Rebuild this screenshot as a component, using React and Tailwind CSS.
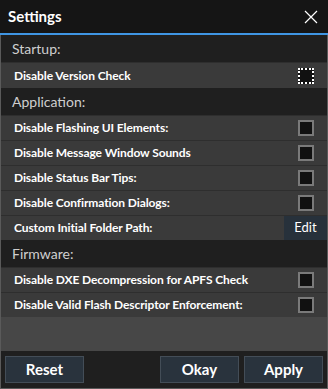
import { useState } from 'react';

const font = { fontFamily: 'Lato, "Noto Sans", sans-serif' };

function Check({ focused, checked, onToggle }) {
  return (
    <button
      onClick={onToggle}
      className={`w-[16px] h-[16px] bg-[#111] ${focused ? 'border-2 border-dotted border-white' : 'border-2 border-[#7a7a7a]'}`}
    >
      {checked && <span className="block w-full h-full bg-[#4a9ce6]" />}
    </button>
  );
}

function Header({ children }) {
  return (
    <div className="h-[27px] flex items-center pl-[11px] bg-[#1f1f1f] text-[14px] text-[#cfcfcf]">
      {children}
    </div>
  );
}

function Row({ label, focused, tall, checked, onToggle, edit }) {
  return (
    <div className={`${tall ? 'h-[26px]' : 'h-[25px]'} flex items-center justify-between bg-[#3a3a3a] border-t border-[#2e2e2e] pl-[13px]`}>
      <span className="text-[12px] font-bold tracking-[-0.1px] text-white">{label}</span>
      {edit ? (
        <button className="h-full w-[43px] bg-[#27313b] text-white text-[13px]">Edit</button>
      ) : (
        <div className="pr-[13px] flex items-center">
          <Check focused={focused} checked={checked} onToggle={onToggle} />
        </div>
      )}
    </div>
  );
}

export default function App() {
  const [checks, setChecks] = useState({});
  const toggle = (k) => setChecks({ ...checks, [k]: !checks[k] });

  return (
    <div style={font} className="w-[328px] h-[389px] flex flex-col bg-[#1f1f1f] overflow-hidden">
      {/* title bar */}
      <div className="h-[33px] flex items-center justify-between pl-[8px] pr-[10px] bg-[#151515]">
        <span className="text-[15px] font-bold text-white">Settings</span>
        <svg width="14" height="14" viewBox="0 0 14 14" className="text-white">
          <path d="M1 1L13 13M13 1L1 13" stroke="currentColor" strokeWidth="1.2" />
        </svg>
      </div>
      <div className="h-[2px] bg-[#3f95e3]" />

      <div className="flex-1 flex flex-col border-x border-b border-[#5a5a5a]">
        <Header>Startup:</Header>
        <Row label="Disable Version Check" tall focused checked={checks.ver} onToggle={() => toggle('ver')} />

        <Header>Application:</Header>
        <Row label="Disable Flashing UI Elements:" checked={checks.flash} onToggle={() => toggle('flash')} />
        <Row label="Disable Message Window Sounds" checked={checks.snd} onToggle={() => toggle('snd')} />
        <Row label="Disable Status Bar Tips:" checked={checks.tips} onToggle={() => toggle('tips')} />
        <Row label="Disable Confirmation Dialogs:" checked={checks.conf} onToggle={() => toggle('conf')} />
        <Row label="Custom Initial Folder Path:" edit />

        <Header>Firmware:</Header>
        <Row label="Disable DXE Decompression for APFS Check" checked={checks.dxe} onToggle={() => toggle('dxe')} />
        <Row label="Disable Valid Flash Descriptor Enforcement:" checked={checks.fd} onToggle={() => toggle('fd')} />

        <div className="flex-1 bg-[#474747]" />

        {/* footer */}
        <div className="h-[37px] flex items-center px-[4px] gap-[5px] bg-[#1f1f1f]">
          <button className="w-[79px] h-[27px] bg-[#29333d] border border-[#434d57] text-white text-[15px] font-bold">Reset</button>
          <div className="flex-1" />
          <button className="w-[79px] h-[27px] bg-[#29333d] border border-[#434d57] text-white text-[15px] font-bold">Okay</button>
          <button className="w-[79px] h-[27px] bg-[#29333d] border border-[#434d57] text-white text-[15px] font-bold">Apply</button>
        </div>
      </div>
    </div>
  );
}
